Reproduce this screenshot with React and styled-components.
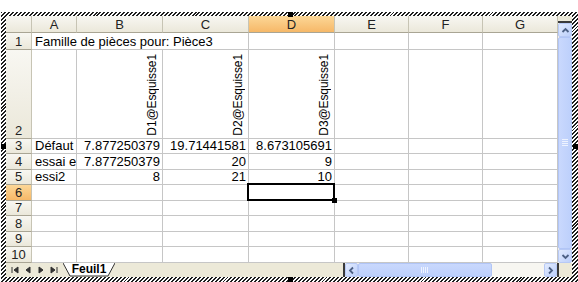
import React from "react";
import styled, { createGlobalStyle, css } from "styled-components";

const Global = createGlobalStyle`
  body {
    margin: 0;
    background: #fff;
    font-family: "Liberation Sans", Arial, sans-serif;
  }
`;

const COLS = [26, 45, 86, 86, 86, 74, 74, 75];
const ROWS = [17, 17, 89, 15, 16, 15, 16, 15, 16, 15, 16];
const LETTERS = ["A", "B", "C", "D", "E", "F", "G"];

const data = {
  3: ["Défaut", "7.877250379", "19.71441581", "8.673105691"],
  4: ["essai e", "7.877250379", "20", "9"],
  5: ["essi2", "8", "21", "10"],
};

function Details() {
  return (
    <Wrapper>
      <Frame>
        <Handle $side="top" />
        <Handle $side="bottom" />
        <Handle $side="left" />
        <Handle $side="right" />
        <Inner>
          <Main>
            <Sheet>
              <HeadCell />
              {LETTERS.map((l) => (
                <HeadCell key={l} $hl={l === "D"}>
                  {l}
                </HeadCell>
              ))}

              <RowHead>1</RowHead>
              <Cell $span={3}>Famille de pièces pour: Pièce3</Cell>
              <Cell />
              <Cell />
              <Cell />
              <Cell />

              <RowHead>2</RowHead>
              <Cell />
              {["D1@Esquisse1", "D2@Esquisse1", "D3@Esquisse1"].map((t) => (
                <Cell key={t} $right>
                  <Rotated>{t}</Rotated>
                </Cell>
              ))}
              <Cell />
              <Cell />
              <Cell />

              {[3, 4, 5, 6, 7, 8, 9, 10].map((r) => {
                const row = data[r] || [];
                return (
                  <React.Fragment key={r}>
                    <RowHead $hl={r === 6}>{r}</RowHead>
                    {LETTERS.map((l, i) => (
                      <Cell
                        key={l}
                        $right={i > 0}
                        $selected={r === 6 && l === "D"}
                      >
                        {row[i]}
                      </Cell>
                    ))}
                  </React.Fragment>
                );
              })}
            </Sheet>

            <VScroll>
              <SplitBox />
              <ScrollButton>
                <Chevron dir="up" />
              </ScrollButton>
              <VThumb />
              <ScrollButton>
                <Chevron dir="down" />
              </ScrollButton>
            </VScroll>
          </Main>

          <BottomBar>
            <Nav>
              <NavIcon d="M1 1v6M7 1L3 4l4 3z" />
              <NavIcon d="M6 1L2 4l4 3z" />
              <NavIcon d="M2 1l4 3-4 3z" />
              <NavIcon d="M1 1l4 3-4 3zM7 1v6" />
            </Nav>
            <Tab>
              <TabShape viewBox="0 0 52 14" preserveAspectRatio="none">
                <polygon points="0,0 7,13 45,13 52,0" fill="#fff" />
                <polyline
                  points="0,0 7,13 45,13 52,0"
                  fill="none"
                  stroke="#333"
                  strokeWidth="1"
                />
              </TabShape>
              <TabLabel>Feuil1</TabLabel>
            </Tab>
            <TabSpace />
            <HSplit />
            <HScroll>
              <ScrollButton $h>
                <Chevron dir="left" />
              </ScrollButton>
              <HThumb />
              <Track />
              <ScrollButton $h>
                <Chevron dir="right" />
              </ScrollButton>
            </HScroll>
            <Corner />
          </BottomBar>
        </Inner>
      </Frame>
    </Wrapper>
  );
}

function Chevron({ dir }) {
  const rot = { up: 0, right: 90, down: 180, left: 270 }[dir];
  return (
    <svg width="9" height="9" viewBox="0 0 9 9">
      <path
        d="M1.5 6L4.5 3l3 3"
        fill="none"
        stroke="#4d6185"
        strokeWidth="1.8"
        transform={`rotate(${rot} 4.5 4.5)`}
      />
    </svg>
  );
}

function NavIcon({ d }) {
  return (
    <svg width="8" height="8" viewBox="0 0 8 8">
      <path d={d} fill="#333" stroke="#333" strokeWidth="1" />
    </svg>
  );
}

export default function App() {
  return (
    <>
      <Global />
      <Details />
    </>
  );
}

const Wrapper = styled.div`
  padding: 12px 0 0 1px;
`;

const Frame = styled.div`
  position: relative;
  box-sizing: border-box;
  width: 577px;
  height: 270px;
  padding: 4px 6px 5px 5px;
  background: repeating-linear-gradient(
    135deg,
    #1e1e1e 0 1.4px,
    #ffffff 1.4px 2.8px
  );
`;

const Handle = styled.div`
  position: absolute;
  width: 5px;
  height: 5px;
  background: #000;
  ${({ $side }) =>
    $side === "top"
      ? css`top: 0; left: 287px;`
      : $side === "bottom"
      ? css`bottom: 0; left: 287px;`
      : $side === "left"
      ? css`left: 0; top: 132px;`
      : css`right: 0; top: 132px;`}
`;

const Inner = styled.div`
  display: flex;
  flex-direction: column;
  height: 261px;
  background: #fff;
`;

const Main = styled.div`
  display: flex;
  height: 247px;
`;

const Sheet = styled.div`
  width: 552px;
  overflow: hidden;
  display: grid;
  grid-template-columns: ${COLS.map((c) => c + "px").join(" ")};
  grid-template-rows: ${ROWS.map((r) => r + "px").join(" ")};
  font-size: 13px;
  color: #000;
`;

const headBase = css`
  box-sizing: border-box;
  display: flex;
  align-items: center;
  justify-content: center;
  font-size: 13px;
  color: #222;
  border-right: 1px solid #c7c4b4;
  border-bottom: 1px solid #a9a594;
  background: ${({ $hl }) =>
    $hl
      ? "linear-gradient(#fcd797, #f6b868)"
      : "linear-gradient(#f8f7f2, #ebe8da)"};
`;

const HeadCell = styled.div`
  ${headBase}
  padding-top: 1px;
`;

const RowHead = styled.div`
  ${headBase}
  align-items: flex-end;
  line-height: 15px;
`;

const Cell = styled.div`
  box-sizing: border-box;
  display: flex;
  align-items: flex-end;
  justify-content: ${({ $right }) => ($right ? "flex-end" : "flex-start")};
  padding: 0 2px 0 3px;
  line-height: 15px;
  white-space: nowrap;
  overflow: hidden;
  border-right: 1px solid #c6c6c6;
  border-bottom: 1px solid #c6c6c6;
  ${({ $span }) => $span && css`grid-column: span ${$span};`}
  ${({ $selected }) =>
    $selected &&
    css`
      position: relative;
      overflow: visible;
      &::after {
        content: "";
        position: absolute;
        left: -2px;
        top: -2px;
        right: -1px;
        bottom: -1px;
        border: 2px solid #000;
      }
      &::before {
        content: "";
        position: absolute;
        right: -3px;
        bottom: -3px;
        width: 5px;
        height: 5px;
        background: #000;
        z-index: 1;
      }
    `}
`;

const Rotated = styled.span`
  writing-mode: vertical-rl;
  transform: rotate(180deg);
  font-size: 12px;
  letter-spacing: -0.1px;
  line-height: 15px;
  padding-top: 2px;
`;

const VScroll = styled.div`
  width: 14px;
  display: flex;
  flex-direction: column;
  background: #f4f2ec;
`;

const SplitBox = styled.div`
  height: 5px;
  background: #ece9d8;
  border-bottom: 2px solid #3a3a3a;
`;

const ScrollButton = styled.div`
  box-sizing: border-box;
  flex: 0 0 ${({ $h }) => ($h ? "13px" : "14px")};
  display: flex;
  align-items: center;
  justify-content: center;
  border: 1px solid #b7c9f5;
  border-radius: 2px;
  background: linear-gradient(135deg, #e2ebfe, #bccffb);
`;

const VThumb = styled.div`
  position: relative;
  flex: 1;
  border: 1px solid #b1c5f6;
  border-radius: 2px;
  background: linear-gradient(90deg, #c9d8fd, #bdd0fb);
  &::after {
    content: "";
    position: absolute;
    left: 3px;
    right: 3px;
    top: 50%;
    height: 7px;
    margin-top: -4px;
    background: repeating-linear-gradient(#eef3ff 0 1px, transparent 1px 2px);
  }
`;

const BottomBar = styled.div`
  display: flex;
  height: 14px;
  background: #ece9d8;
`;

const Nav = styled.div`
  width: 57px;
  display: flex;
  align-items: center;
  justify-content: space-around;
  padding: 0 2px;
  box-sizing: border-box;
`;

const Tab = styled.div`
  position: relative;
  width: 52px;
  display: flex;
  align-items: center;
  justify-content: center;
`;

const TabShape = styled.svg`
  position: absolute;
  inset: 0;
  width: 100%;
  height: 100%;
`;

const TabLabel = styled.span`
  position: relative;
  font-size: 12px;
  font-weight: bold;
  color: #000;
  line-height: 13px;
  margin-top: -1px;
`;

const TabSpace = styled.div`
  flex: 1;
`;

const HSplit = styled.div`
  width: 3px;
  background: #3a3a3a;
  border-left: 1px solid #ece9d8;
  box-sizing: border-box;
`;

const HScroll = styled.div`
  width: 212px;
  display: flex;
  background: #f4f2ec;
`;

const HThumb = styled.div`
  position: relative;
  width: 134px;
  border: 1px solid #b1c5f6;
  border-radius: 2px;
  box-sizing: border-box;
  background: linear-gradient(#c9d8fd, #bdd0fb);
  &::after {
    content: "";
    position: absolute;
    top: 3px;
    bottom: 3px;
    left: 50%;
    width: 7px;
    margin-left: -4px;
    background: repeating-linear-gradient(90deg, #eef3ff 0 1px, transparent 1px 2px);
  }
`;

const Track = styled.div`
  flex: 1;
  background: #f7f6f1;
`;

const Corner = styled.div`
  width: 15px;
  box-sizing: border-box;
  border-left: 2px solid #3a3a3a;
  background: #ece9d8;
`;
